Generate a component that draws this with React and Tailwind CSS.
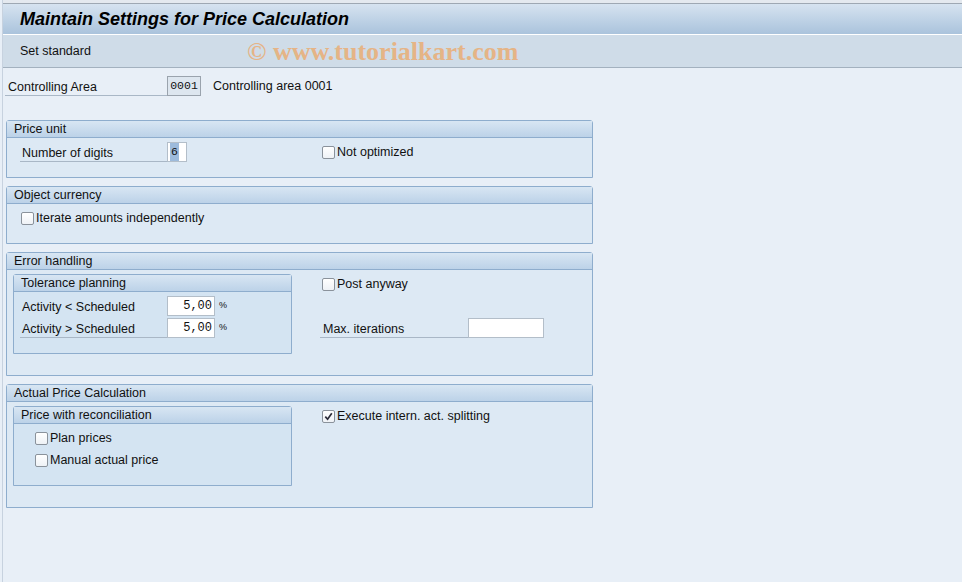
const Checkbox = ({ checked }) => (
	<span className="flex h-[13px] w-[13px] shrink-0 items-center justify-center rounded-[2px] border border-[#8a929b] bg-gradient-to-b from-white to-[#eef2f6]">
		{checked && (
			<svg width="9" height="9" viewBox="0 0 9 9">
				<path d="M1.3 4.6 L3.6 7.2 L7.8 1.2" fill="none" stroke="#2b2b38" strokeWidth="1.7" />
			</svg>
		)}
	</span>
);

const CheckRow = ({ label, checked, className = "" }) => (
	<div className={`flex h-[20px] items-center gap-[2px] ${className}`}>
		<Checkbox checked={checked} />
		<span className="pt-[1px]">{label}</span>
	</div>
);

const Group = ({ title, children, className = "", inner }) => (
	<div className={`rounded-t-[3px] border border-[#8eadcd] ${inner ? "bg-[#d4e4f2]" : "bg-[#dde9f4]"} ${className}`}>
		<div className="flex h-[17px] items-center border-b border-[#8eadcd] bg-gradient-to-b from-[#d8e6f3] to-[#bcd2e8] pl-[7px]">{title}</div>
		{children}
	</div>
);

const PctRow = ({ label, value, underline }) => (
	<div className="flex h-[20px] items-stretch">
		<div className={`ml-[6px] flex w-[147px] items-center pl-[2px] pt-[3px] ${underline ? "border-b border-[#a9b7c6]" : ""}`}>{label}</div>
		<div className="flex w-[48px] items-center justify-end border border-[#b3bec9] bg-white pr-[2px] font-['Liberation_Mono',monospace] text-[12px]">{value}</div>
		<span className="ml-[4px] flex items-center text-[9px]">%</span>
	</div>
);

export default function App() {
	return (
		<div className="h-[582px] w-[962px] overflow-hidden bg-[#e8eff7] pl-[2px] font-['Liberation_Sans',Arial,sans-serif] text-[12.5px] text-[#111]">
			<div className="h-full border-l border-[#c7d2df]">
				<div className="h-[3px] bg-[#e4e9ef]" />
				<div className="flex h-[31px] items-center border-t border-[#9ea8b3] bg-gradient-to-b from-[#d6e3f0] to-[#aac3dc] pl-[17px] text-[18px] font-bold italic text-black">
					Maintain Settings for Price Calculation
				</div>
				<div className="relative flex h-[34px] items-center border-t border-white border-b border-b-[#a3b1bf] bg-[#cfdce8] pl-[17px]">
					<span>Set standard</span>
					<span className="absolute left-[244px] top-[4px] font-['Liberation_Serif',serif] text-[26px] font-bold leading-none text-[#e8b07c] opacity-90">
						© www.tutorialkart.com
					</span>
				</div>

				<div className="mt-[8px] flex h-[20px] items-stretch">
					<div className="ml-[2px] flex w-[162px] items-center border-b border-[#a9b7c6] pl-[3px] pt-[3px]">Controlling Area</div>
					<div className="flex w-[34px] items-center justify-center border border-[#9aa3ad] bg-[#dde6ef] font-['Liberation_Mono',monospace] text-[11.5px]">0001</div>
					<span className="ml-[12px] flex items-center pt-[1px]">Controlling area 0001</span>
				</div>

				<div className="ml-[3px] mt-[24px] flex w-[587px] flex-col gap-[8px]">
					<Group title="Price unit" className="h-[58px]">
						<div className="flex pt-[4px]">
							<div className="w-[313px]">
								<div className="flex h-[20px] items-stretch">
									<div className="ml-[13px] flex w-[147px] items-center border-b border-[#a9b7c6] pl-[2px] pt-[3px]">Number of digits</div>
									<div className="flex w-[20px] items-center border border-[#b3bec9] bg-white pl-[2px] font-['Liberation_Mono',monospace] text-[11.5px]">
										<span className="bg-[#9dbbdc] px-[1px]">6</span>
									</div>
								</div>
							</div>
							<CheckRow label="Not optimized" className="pl-[2px]" />
						</div>
					</Group>

					<Group title="Object currency" className="h-[58px]">
						<div className="pt-[4px]">
							<CheckRow label="Iterate amounts independently" className="ml-[14px]" />
						</div>
					</Group>

					<Group title="Error handling" className="h-[124px]">
						<div className="flex pt-[4px]">
							<div className="w-[313px]">
								<Group title="Tolerance planning" inner className="ml-[6px] h-[80px] w-[279px]">
									<div className="flex flex-col gap-[2px] pt-[4px]">
										<PctRow label="Activity < Scheduled" value="5,00" />
										<PctRow label="Activity > Scheduled" value="5,00" underline />
									</div>
								</Group>
							</div>
							<div className="flex flex-col">
								<CheckRow label="Post anyway" className="pl-[2px]" />
								<div className="mt-[24px] flex h-[20px] items-stretch">
									<div className="flex w-[148px] items-center border-b border-[#a9b7c6] pl-[3px] pt-[3px]">Max. iterations</div>
									<div className="w-[76px] border border-[#b3bec9] bg-white" />
								</div>
							</div>
						</div>
					</Group>

					<Group title="Actual Price Calculation" className="h-[124px]">
						<div className="flex pt-[4px]">
							<div className="w-[313px]">
								<Group title="Price with reconciliation" inner className="ml-[6px] h-[80px] w-[279px]">
									<div className="flex flex-col gap-[2px] pt-[4px]">
										<CheckRow label="Plan prices" className="ml-[21px]" />
										<CheckRow label="Manual actual price" className="ml-[21px]" />
									</div>
								</Group>
							</div>
							<CheckRow label="Execute intern. act. splitting" checked className="pl-[2px]" />
						</div>
					</Group>
				</div>
			</div>
		</div>
	);
}
